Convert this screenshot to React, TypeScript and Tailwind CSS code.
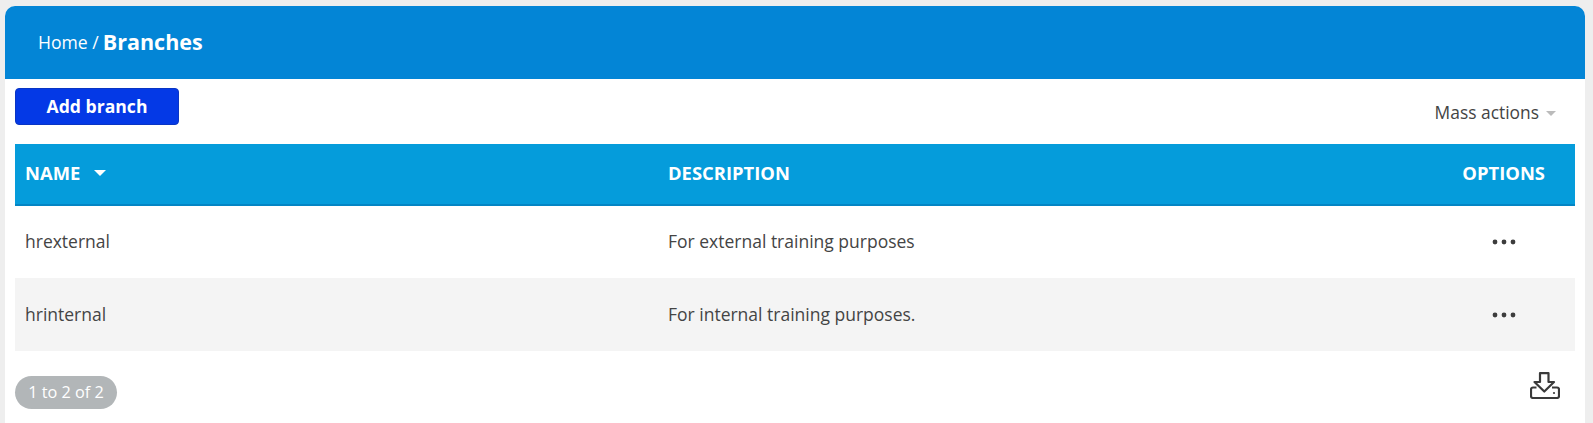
const font = "font-['Open_Sans',sans-serif]";

const rows = [
  { name: "hrexternal", description: "For external training purposes", rowClass: "h-[72px] bg-white", textClass: "pb-[2px]" },
  { name: "hrinternal", description: "For internal training purposes.", rowClass: "h-[73px] bg-[#f4f4f4]", textClass: "" },
];

function Dots() {
  return (
    <svg width="24" height="6" viewBox="0 0 24 6" fill="#3c3c3c" aria-hidden="true">
      <circle cx="3" cy="3" r="2.4" />
      <circle cx="12" cy="3" r="2.4" />
      <circle cx="21" cy="3" r="2.4" />
    </svg>
  );
}

function ExportIcon() {
  return (
    <svg width="30" height="27" viewBox="0 0 30 27" fill="none" stroke="#3a3a3a" strokeWidth="2.2" strokeLinejoin="round" aria-hidden="true">
      <path d="M10 1.200h8.500V10h5.500l-9.700 9.500L4.500 10H10z" />
      <path d="M6.500 15.500H3a2 2 0 0 0-2 2V24a2 2 0 0 0 2 2h24a2 2 0 0 0 2-2v-6.500a2 2 0 0 0-2-2h-5" />
      <circle cx="24" cy="21" r="1.100" fill="#3a3a3a" stroke="none" />
    </svg>
  );
}

export default function App() {
  return (
    <div className={`${font} h-[423px] overflow-hidden bg-[#eeeeee] pt-[6px] pl-[5px] pr-[8px]`}>
      <div className="h-[417px] rounded-t-[10px] bg-white">
        <header className="flex h-[73px] items-center rounded-t-[10px] bg-[#0385d6] pl-[33px] text-white">
          <span className="text-[17.6px]">Home /</span>
          <span className="ml-[4px] text-[21.5px] font-bold">Branches</span>
        </header>

        <div className="px-[10px]">
          <div className="flex h-[65px] items-start justify-between">
            <button className="mt-[9px] h-[37px] w-[164px] rounded-[4px] border border-[#0a35c4] bg-[#0439e6] text-[17.6px] font-bold text-white">
              Add branch
            </button>
            <div className="mt-[20px] mr-[19px] flex items-center gap-[7px] text-[17.4px] text-[#444444]">
              Mass actions
              <span className="mt-[3px] border-x-[5px] border-t-[5px] border-x-transparent border-t-[#bbbbbb]" />
            </div>
          </div>

          <div className="grid h-[62px] grid-cols-[643px_1fr_auto] items-center border-b-2 border-[#0385c4] bg-[#059cdb] pr-[30px] pb-[2px] pl-[10px] text-[18.4px] font-bold text-white">
            <div className="flex items-center gap-[14px]">
              NAME
              <span className="border-x-[6px] border-t-[6px] border-x-transparent border-t-white" />
            </div>
            <div>DESCRIPTION</div>
            <div>OPTIONS</div>
          </div>

          {rows.map((row) => (
            <div
              key={row.name}
              className={`grid grid-cols-[643px_1fr_auto] items-center pr-[59px] pl-[10px] text-[17.5px] text-[#444444] ${row.rowClass}`}
            >
              <div className={row.textClass}>{row.name}</div>
              <div className={row.textClass}>{row.description}</div>
              <Dots />
            </div>
          ))}

          <div className="flex items-start justify-between pt-[25px] pr-[15px]">
            <span className="flex h-[33px] w-[102px] items-center justify-center rounded-full bg-[#b2b6b8] text-[16.3px] text-white">
              1 to 2 of 2
            </span>
            <div className="-mt-[4px]">
              <ExportIcon />
            </div>
          </div>
        </div>
      </div>
    </div>
  );
}
